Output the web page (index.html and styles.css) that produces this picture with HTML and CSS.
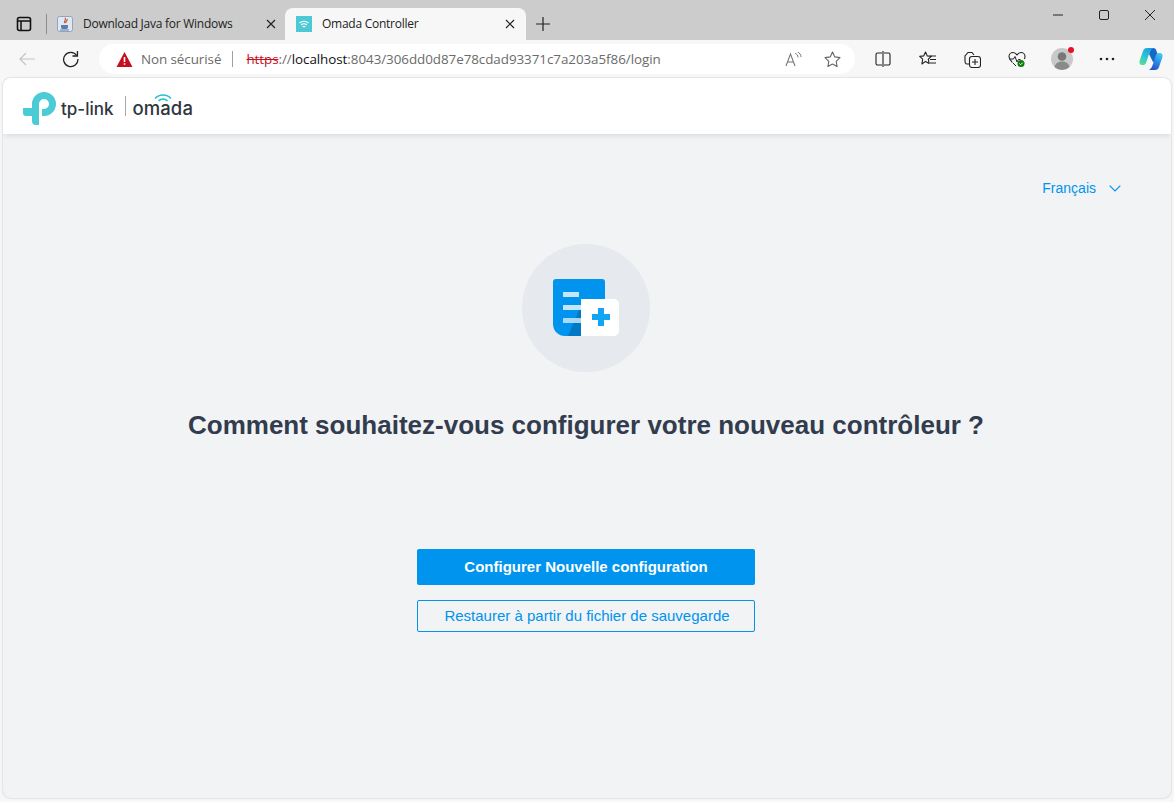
FILE: index.html
```html
<!doctype html>
<html lang="fr">
  <head>
    <meta charset="utf-8">
    <title>Omada Controller</title>
    <link rel="stylesheet" href="styles.css">
  </head>
  <body>
    <div class="tabstrip">
      <svg class="tab_actions" width="16" height="16" viewBox="0 0 16 16"><rect x="1.500" y="1.500" width="13" height="13" rx="2" fill="none" stroke="#111" stroke-width="1.600"/><path d="M1.500 5h13M5 5v9.500" fill="none" stroke="#111" stroke-width="1.500"/></svg>
      <span class="tab_sep"></span>
      <div class="tab">
        <svg class="favicon" width="16" height="16" viewBox="0 0 16 16"><rect x=".5" y=".5" width="15" height="15" rx="2" fill="#dfe7f1" stroke="#8fa5bf"/><path d="M8 2c2 2-2 3 0 5M10 3c1 2-2 2-1 4" fill="none" stroke="#c9582f" stroke-width="1.200"/><path d="M4 9h7v2c0 1.500-1 2-2 2H6c-1 0-2-.5-2-2z" fill="#5b7ea8"/><path d="M3 14h9" stroke="#5b7ea8"/></svg>
        <span class="tab_title">Download Java for Windows</span>
        <svg class="tab_close" width="10" height="10" viewBox="0 0 10 10"><path d="M1 1l8 8M9 1l-8 8" stroke="#222" stroke-width="1.200"/></svg>
      </div>
      <div class="tab active">
        <svg class="favicon" width="16" height="16" viewBox="0 0 16 16"><rect width="16" height="16" fill="#4dc9d6"/><path d="M3.500 7a6.500 6.500 0 0 1 9 0M5.200 9a4 4 0 0 1 5.600 0M6.800 11a1.700 1.700 0 0 1 2.400 0" fill="none" stroke="#fff" stroke-width="1.100"/></svg>
        <span class="tab_title">Omada Controller</span>
        <svg class="tab_close" width="10" height="10" viewBox="0 0 10 10"><path d="M1 1l8 8M9 1l-8 8" stroke="#222" stroke-width="1.200"/></svg>
      </div>
      <svg class="new_tab" width="14" height="14" viewBox="0 0 14 14"><path d="M7 0v14M0 7h14" stroke="#222" stroke-width="1.200"/></svg>
      <div class="window_buttons">
        <svg width="10" height="10" viewBox="0 0 10 10"><path d="M0 5h10" stroke="#222"/></svg>
        <svg width="10" height="10" viewBox="0 0 10 10"><rect x=".5" y=".5" width="9" height="9" rx="1.500" fill="none" stroke="#222"/></svg>
        <svg width="10" height="10" viewBox="0 0 10 10"><path d="M0 0l10 10M10 0L0 10" stroke="#222"/></svg>
      </div>
    </div>

    <div class="toolbar">
      <svg class="back" width="16" height="14" viewBox="0 0 16 14"><path d="M16 7H1M7 1L1 7l6 6" fill="none" stroke="#c4c4c4" stroke-width="1.200"/></svg>
      <svg class="reload" width="18" height="18" viewBox="0 0 18 18"><path d="M14.800 5.500A7.200 7.200 0 1 0 16 9" fill="none" stroke="#222" stroke-width="1.300"/><path d="M15.500 1v5h-5" fill="none" stroke="#222" stroke-width="1.300"/></svg>
      <div class="address">
        <svg width="17" height="15" viewBox="0 0 16 15"><path d="M8 0l8 15H0z" fill="#c50f1f"/><path d="M8 5v5M8 11.200v1.600" stroke="#fff" stroke-width="1.600"/></svg>
        <span class="not_secure">Non sécurisé</span>
        <span class="address_sep"></span>
        <span class="url"><s class="scheme">https</s>://<b class="host">localhost</b>:8043/306dd0d87e78cdad93371c7a203a5f86/login</span>
        <svg class="read_aloud" width="17" height="15" viewBox="0 0 17 15"><path d="M1 14L5.500 2 10 14M2.500 10h6" fill="none" stroke="#777" stroke-width="1.100"/><path d="M10 1.500c2 .5 3 2 3 4M12.500 0c2 .8 3.500 2.500 3.500 5" fill="none" stroke="#777"/></svg>
        <svg class="fav_star" width="17" height="17" viewBox="0 0 17 17"><path d="M8.500 1l2.300 4.900 5.200.7-3.800 3.700.9 5.300-4.600-2.500-4.600 2.500.9-5.300L1 6.600l5.200-.7z" fill="none" stroke="#666" stroke-width="1.100" stroke-linejoin="round"/></svg>
      </div>
      <div class="tools">
        <svg width="16" height="16" viewBox="0 0 16 16"><path d="M7 2H2.500A1.500 1.500 0 0 0 1 3.500v9A1.500 1.500 0 0 0 2.500 14H7M9 2h4.500A1.500 1.500 0 0 1 15 3.500v9a1.500 1.500 0 0 1-1.500 1.500H9M8 0v16" fill="none" stroke="#222" stroke-width="1.100"/></svg>
        <svg width="18" height="16" viewBox="0 0 18 16"><path d="M6.500 1l1.800 3.900 4 .5-3 2.800.8 4.200-3.600-2-3.600 2.600.8-4.800-3-2.800 4-.5z" fill="none" stroke="#222" stroke-width="1.100" stroke-linejoin="round"/><path d="M11 5h6M11 8.500h6M11 12h6" stroke="#222" stroke-width="1.100"/></svg>
        <svg width="17" height="17" viewBox="0 0 17 17"><path d="M5 13H3.500A2.500 2.500 0 0 1 1 10.500V5l3-3.500h4L10 4" fill="none" stroke="#222" stroke-width="1.100"/><rect x="5.500" y="5.500" width="11" height="11" rx="2.500" fill="#f7f7f7" stroke="#222" stroke-width="1.100"/><path d="M11 8v6M8 11h6" stroke="#222" stroke-width="1.100"/></svg>
        <svg width="18" height="17" viewBox="0 0 18 17"><path d="M4 11C2 9 1 7.500 1 5.500 1 3 3 1.500 5 1.500c1.800 0 3 1 4 2.300 1-1.300 2.200-2.300 4-2.300 2 0 4 1.500 4 4 0 1-.2 1.700-.7 2.500" fill="none" stroke="#222" stroke-width="1.100"/><path d="M1.500 8h4l1.500-2.500L9 11l1.500-2.500h2M4.500 11.500L8 15" fill="none" stroke="#222"/><circle cx="13" cy="12.500" r="3.500" fill="#107c10"/><path d="M11.500 12.500l1.200 1.200 2-2" fill="none" stroke="#fff"/></svg>
        <div class="profile">
          <svg width="22" height="22" viewBox="0 0 22 22"><circle cx="11" cy="11" r="11" fill="#c9c9c9"/><circle cx="11" cy="8.500" r="4.300" fill="#777"/><path d="M3.500 19c1-4 4-5.500 7.500-5.500s6.500 1.500 7.500 5.500a11 11 0 0 1-15 0z" fill="#8a8a8a"/></svg>
          <span class="profile_dot"></span>
        </div>
        <svg width="16" height="4" viewBox="0 0 16 4"><circle cx="2" cy="2" r="1.300" fill="#222"/><circle cx="8" cy="2" r="1.300" fill="#222"/><circle cx="14" cy="2" r="1.300" fill="#222"/></svg>
        <svg class="copilot" width="24" height="24" viewBox="0 0 24 24">
          <defs>
            <linearGradient id="copilot_left" x1="0.700" y1="0" x2="0.200" y2="1"><stop offset="0" stop-color="#1f9fe0"/><stop offset=".6" stop-color="#2ecbd0"/><stop offset="1" stop-color="#5fdc8c"/></linearGradient>
            <linearGradient id="copilot_right" x1="0.800" y1="0" x2="0.300" y2="1"><stop offset="0" stop-color="#3fd0f0"/><stop offset=".6" stop-color="#2a7de0"/><stop offset="1" stop-color="#2450c8"/></linearGradient>
          </defs>
          <path d="M14 1c2 0 3 1 3.500 3L21 15h-7L10 7c1-3 2-6 4-6z" fill="#1668c8"/>
          <path d="M8 1h6c-2 1-3 3-4 6l-3 9c-.5 1.500-2 2-3 2H3c-2 0-3-2-2.500-4L4 4c.5-2 2-3 4-3z" fill="url(#copilot_left)"/>
          <path d="M16 23h-6c2-1 3-3 4-6l3-9c.5-1.500 2-2 3-2h1c2 0 3 2 2.500 4L20 20c-.5 2-2 3-4 3z" fill="url(#copilot_right)"/>
        </svg>
      </div>
    </div>

    <div class="frame">
      <header class="topbar">
        <svg class="tp_mark" width="34" height="34" viewBox="0 0 34 34"><path d="M9 12A12 12 0 1 1 21 24H19V17H21A5 5 0 1 0 16 12V33H13A4 4 0 0 1 9 29V24H3A3 3 0 0 1 0 21V16H9Z" fill="#4acbd6"/></svg>
        <span class="tp_text">tp-link</span>
        <span class="logo_sep"></span>
        <span class="omada_text">omada<svg class="omada_arcs" width="18" height="9" viewBox="0 0 18 9"><path d="M1 5.500a11 11 0 0 1 16 0M4.500 8a6 6 0 0 1 9 0" fill="none" stroke="#25c1d3" stroke-width="1.600"/></svg></span>
      </header>
      <main class="setup">
        <div class="lang_row">
          <span class="lang">Français</span>
          <svg width="12" height="7" viewBox="0 0 12 7"><path d="M.7.7L6 6l5.300-5.300" fill="none" stroke="#0094ee" stroke-width="1.200"/></svg>
        </div>
        <div class="hero_icon">
          <svg width="66" height="58" viewBox="0 0 66 58">
            <path d="M3 0h46a3 3 0 0 1 3 3v54H12A12 12 0 0 1 0 45V3a3 3 0 0 1 3-3z" fill="#0094ee"/>
            <path d="M15 57l13-31v31z" fill="#0079c4"/>
            <rect x="10" y="13" width="16" height="5" fill="#c4e6fb"/>
            <rect x="10" y="26" width="18" height="5" fill="#c4e6fb"/>
            <rect x="10" y="39" width="18" height="5" fill="#c4e6fb" opacity=".85"/>
            <path d="M28 20h33a5 5 0 0 1 5 5v27a5 5 0 0 1-5 5H28z" fill="#fff"/>
            <path d="M45 29h6v6h6v6h-6v6h-6v-6h-6v-6h6z" fill="#12a5f4"/>
          </svg>
        </div>
        <h1 class="question">Comment souhaitez-vous configurer votre nouveau contrôleur ?</h1>
        <button class="btn primary">Configurer Nouvelle configuration</button>
        <button class="btn secondary">Restaurer à partir du fichier de sauvegarde</button>
      </main>
    </div>
  </body>
</html>
```

FILE: styles.css
```css
* {
  box-sizing: border-box;
}
html, body {
  margin: 0;
  height: 100%;
}
body {
  width: 1174px;
  height: 802px;
  overflow: hidden;
  background: #f7f7f7;
  font-family: "Liberation Sans", Arial, sans-serif;
  display: flex;
  flex-direction: column;
}

/* browser chrome */
.tabstrip {
  height: 40px;
  flex: none;
  background: #cccccc;
  display: flex;
  align-items: flex-end;
  padding-left: 16px;
}
.tab_actions {
  margin-bottom: 8px;
}
.tab_sep {
  width: 1px;
  height: 20px;
  background: #8c8c8c;
  margin: 0 10px 6px 14px;
}
.tab {
  height: 32px;
  width: 229px;
  display: flex;
  align-items: center;
  padding: 0 10px 0 0;
  font-family: "Open Sans", sans-serif;
  font-size: 12px;
  letter-spacing: -0.26px;
  color: #222;
}
.tab.active {
  width: 241px;
  height: 32px;
  margin-left: -1px;
  padding: 0 11px 0 11px;
  background: #f7f7f7;
  border-radius: 8px 8px 0 0;
}
.favicon {
  flex: none;
  margin-right: 10px;
}
.tab_title {
  flex: 1;
  white-space: nowrap;
  margin-top: -1px;
}
.tab .tab_close {
  flex: none;
}
.new_tab {
  margin: 0 0 9px 10px;
}
.window_buttons {
  margin-left: auto;
  height: 100%;
  display: flex;
  align-items: center;
  gap: 36px;
  padding: 0 19px 10px 0;
}
.toolbar {
  height: 38px;
  flex: none;
  display: flex;
  align-items: center;
  padding-left: 19px;
}
.reload {
  margin-left: 27px;
}
.address {
  width: 759px;
  height: 30px;
  margin-left: 19px;
  border-radius: 15px;
  background: #fff;
  display: flex;
  align-items: center;
  padding: 0 14px 0 17px;
  font-family: "Open Sans", sans-serif;
  font-size: 13.400px;
  letter-spacing: -0.05px;
  color: #6b6b6b;
  white-space: nowrap;
}
.not_secure {
  margin-left: 8px;
}
.address_sep {
  width: 1px;
  height: 16px;
  background: #a0a0a0;
  margin: 0 13px 0 11px;
}
.scheme {
  color: #c50f1f;
}
.host {
  font-weight: 400;
  color: #111;
}
.read_aloud {
  margin-left: auto;
}
.fav_star {
  margin-left: 22px;
  flex: none;
}
.tools {
  flex: 1;
  display: grid;
  grid-template-columns: repeat(7, 44.800px);
  align-items: center;
  justify-items: center;
  padding-left: 5px;
}
.copilot {
  margin-right: 2px;
}
.profile {
  position: relative;
  height: 22px;
}
.profile_dot {
  position: absolute;
  top: -1px;
  right: -1px;
  width: 6px;
  height: 6px;
  border-radius: 50%;
  background: #e81123;
}

/* page */
.frame {
  flex: 1;
  margin: 0 3px 4px;
  background: #f1f3f5;
  border-radius: 8px;
  overflow: hidden;
  display: flex;
  flex-direction: column;
  box-shadow: 0 0 2px rgba(0, 0, 0, 0.25);
}
.topbar {
  height: 56px;
  flex: none;
  background: #fff;
  display: flex;
  align-items: center;
  padding-left: 20px;
  box-shadow: 0 1px 6px rgba(0, 0, 0, 0.12);
}
.tp_mark {
  margin-top: 5px;
}
.tp_text {
  margin: 5px 0 0 4px;
  font-family: Inter, sans-serif;
  font-weight: 500;
  font-size: 17px;
  color: #2f3640;
}
.logo_sep {
  width: 1px;
  height: 20px;
  background: #a8a8a8;
  margin: 0 6px 0 12px;
}
.omada_text {
  position: relative;
  margin-top: 3px;
  font-family: Inter, sans-serif;
  font-weight: 500;
  font-size: 18.500px;
  letter-spacing: 0.1px;
  color: #2f3640;
}
.omada_arcs {
  position: absolute;
  left: 22px;
  top: -4px;
}
.setup {
  flex: 1;
  display: flex;
  flex-direction: column;
  align-items: center;
}
.lang_row {
  align-self: stretch;
  display: flex;
  justify-content: flex-end;
  align-items: center;
  gap: 13px;
  padding: 46px 50px 0 0;
  height: 62px;
  color: #0094ee;
  font-size: 14px;
  font-family: "Liberation Sans", Arial, sans-serif;
}
.hero_icon {
  width: 128px;
  height: 128px;
  margin: 48px 2px 0 0;
  border-radius: 50%;
  background: #e6e9ed;
  display: flex;
  align-items: center;
  justify-content: center;
}
.question {
  margin: 35px 2px 0 0;
  font-size: 26px;
  line-height: 36px;
  font-weight: 700;
  color: #323c4d;
}
.btn {
  width: 338px;
  font-family: "Liberation Sans", Arial, sans-serif;
  font-size: 15px;
  border-radius: 2px;
  margin-right: 2px;
  padding: 0 0 2px;
}
.primary {
  height: 36px;
  margin-top: 106px;
  border: 0;
  background: #0094ee;
  color: #fff;
  font-weight: 700;
}
.secondary {
  height: 32px;
  margin-top: 15px;
  padding-left: 2px;
  border: 1px solid #0094ee;
  background: transparent;
  color: #0094ee;
}
```
